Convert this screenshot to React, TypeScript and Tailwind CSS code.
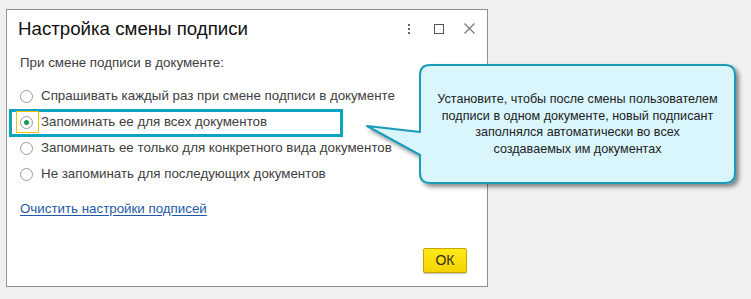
import React from "react";

const options = [
  "Спрашивать каждый раз при смене подписи в документе",
  "Запоминать ее для всех документов",
  "Запоминать ее только для конкретного вида документов",
  "Не запоминать для последующих документов",
];

const Radio = ({ checked }: { checked: boolean }) => (
  <span className="w-[13px] h-[13px] rounded-full border border-[#9a9a9a] bg-white flex items-center justify-center shrink-0">
    {checked && <span className="w-[5px] h-[5px] rounded-full bg-[#169a55]" />}
  </span>
);

export default function App() {
  return (
    <div className="relative w-[751px] h-[299px] bg-[#f0f0f0] overflow-hidden [font-family:'Liberation_Sans',Arial,sans-serif]">
      <div className="pt-[9px] pl-[6px]">
        <div className="w-[482px] h-[278px] border border-[#8f8f8f] bg-white flex flex-col">
          <div className="h-[37px] flex items-center pl-[11px] pr-[8px]">
            <div className="flex-1 text-[18.7px] leading-[22px] text-[#111]">Настройка смены подписи</div>
            <div className="flex items-center gap-[10px]">
              <span className="w-[20px] h-[20px] flex flex-col items-center justify-center gap-[2px]">
                <span className="w-[2px] h-[2px] bg-[#666]" />
                <span className="w-[2px] h-[2px] bg-[#666]" />
                <span className="w-[2px] h-[2px] bg-[#666]" />
              </span>
              <span className="w-[20px] h-[20px] flex items-center justify-center">
                <span className="w-[10px] h-[10px] border-[1.5px] border-[#555]" />
              </span>
              <span className="w-[20px] h-[20px] flex items-center justify-center">
                <svg width="11" height="11" viewBox="0 0 11 11">
                  <path d="M0.5 0.5 L10.5 10.5 M10.5 0.5 L0.5 10.5" stroke="#777" strokeWidth="1.2" />
                </svg>
              </span>
            </div>
          </div>

          <div className="pl-[13px] mt-[8px] text-[13.33px] leading-[16px] text-[#404040]">
            При смене подписи в документе:
          </div>

          <div className="mt-[12px] pl-[13px] flex flex-col">
            {options.map((o, i) => (
              <div key={o} className="relative h-[26px] flex items-center gap-[8px] text-[13.33px] text-[#404040]">
                {i === 1 && (
                  <span className="absolute left-[-11px] top-0 w-[334px] h-[28px] border-[3px] border-[#0fa3c3]" />
                )}
                <span className="relative flex items-center">
                  {i === 1 && (
                    <span className="absolute left-[-4px] top-[-5px] w-[23px] h-[22px] border border-[#f2c200]" />
                  )}
                  <Radio checked={i === 1} />
                </span>
                <span className="relative">{o}</span>
              </div>
            ))}
          </div>

          <div className="mt-[14px] pl-[13px] text-[13.33px] leading-[16px]">
            <span className="text-[#2557a7] underline underline-offset-[2px]">Очистить настройки подписей</span>
          </div>

          <div className="mt-auto mb-[13px] mr-[20px] self-end">
            <button className="w-[44px] h-[25px] rounded-[2px] border border-[#c3a600] bg-gradient-to-b from-[#ffe81a] to-[#f5d300] text-[14px] text-[#2b2b2b] shadow-[0_1px_1px_rgba(0,0,0,0.25)]">
              ОК
            </button>
          </div>
        </div>
      </div>

      <svg className="absolute left-[360px] top-[60px]" width="390" height="135" viewBox="0 0 390 135">
        <defs>
          <filter id="sh" x="-10%" y="-10%" width="130%" height="140%">
            <feDropShadow dx="3" dy="3" stdDeviation="2" floodColor="#000" floodOpacity="0.45" />
          </filter>
        </defs>
        <path
          d="M70 5 H365 Q375 5 375 15 V113 Q375 123 365 123 H70 Q60 123 60 113 V95 L7 66 L60 72 V15 Q60 5 70 5 Z"
          fill="#d9f6fd"
          stroke="#1c9bb9"
          strokeWidth="2"
          strokeLinejoin="round"
          filter="url(#sh)"
        />
      </svg>
      <div className="absolute left-[420px] top-[65px] w-[315px] h-[118px] flex items-center justify-center text-center text-[12.6px] leading-[16.5px] text-[#222]">
        Установите, чтобы после смены пользователем
        <br />
        подписи в одном документе, новый подписант
        <br />
        заполнялся автоматически во всех
        <br />
        создаваемых им документах
      </div>
    </div>
  );
}
